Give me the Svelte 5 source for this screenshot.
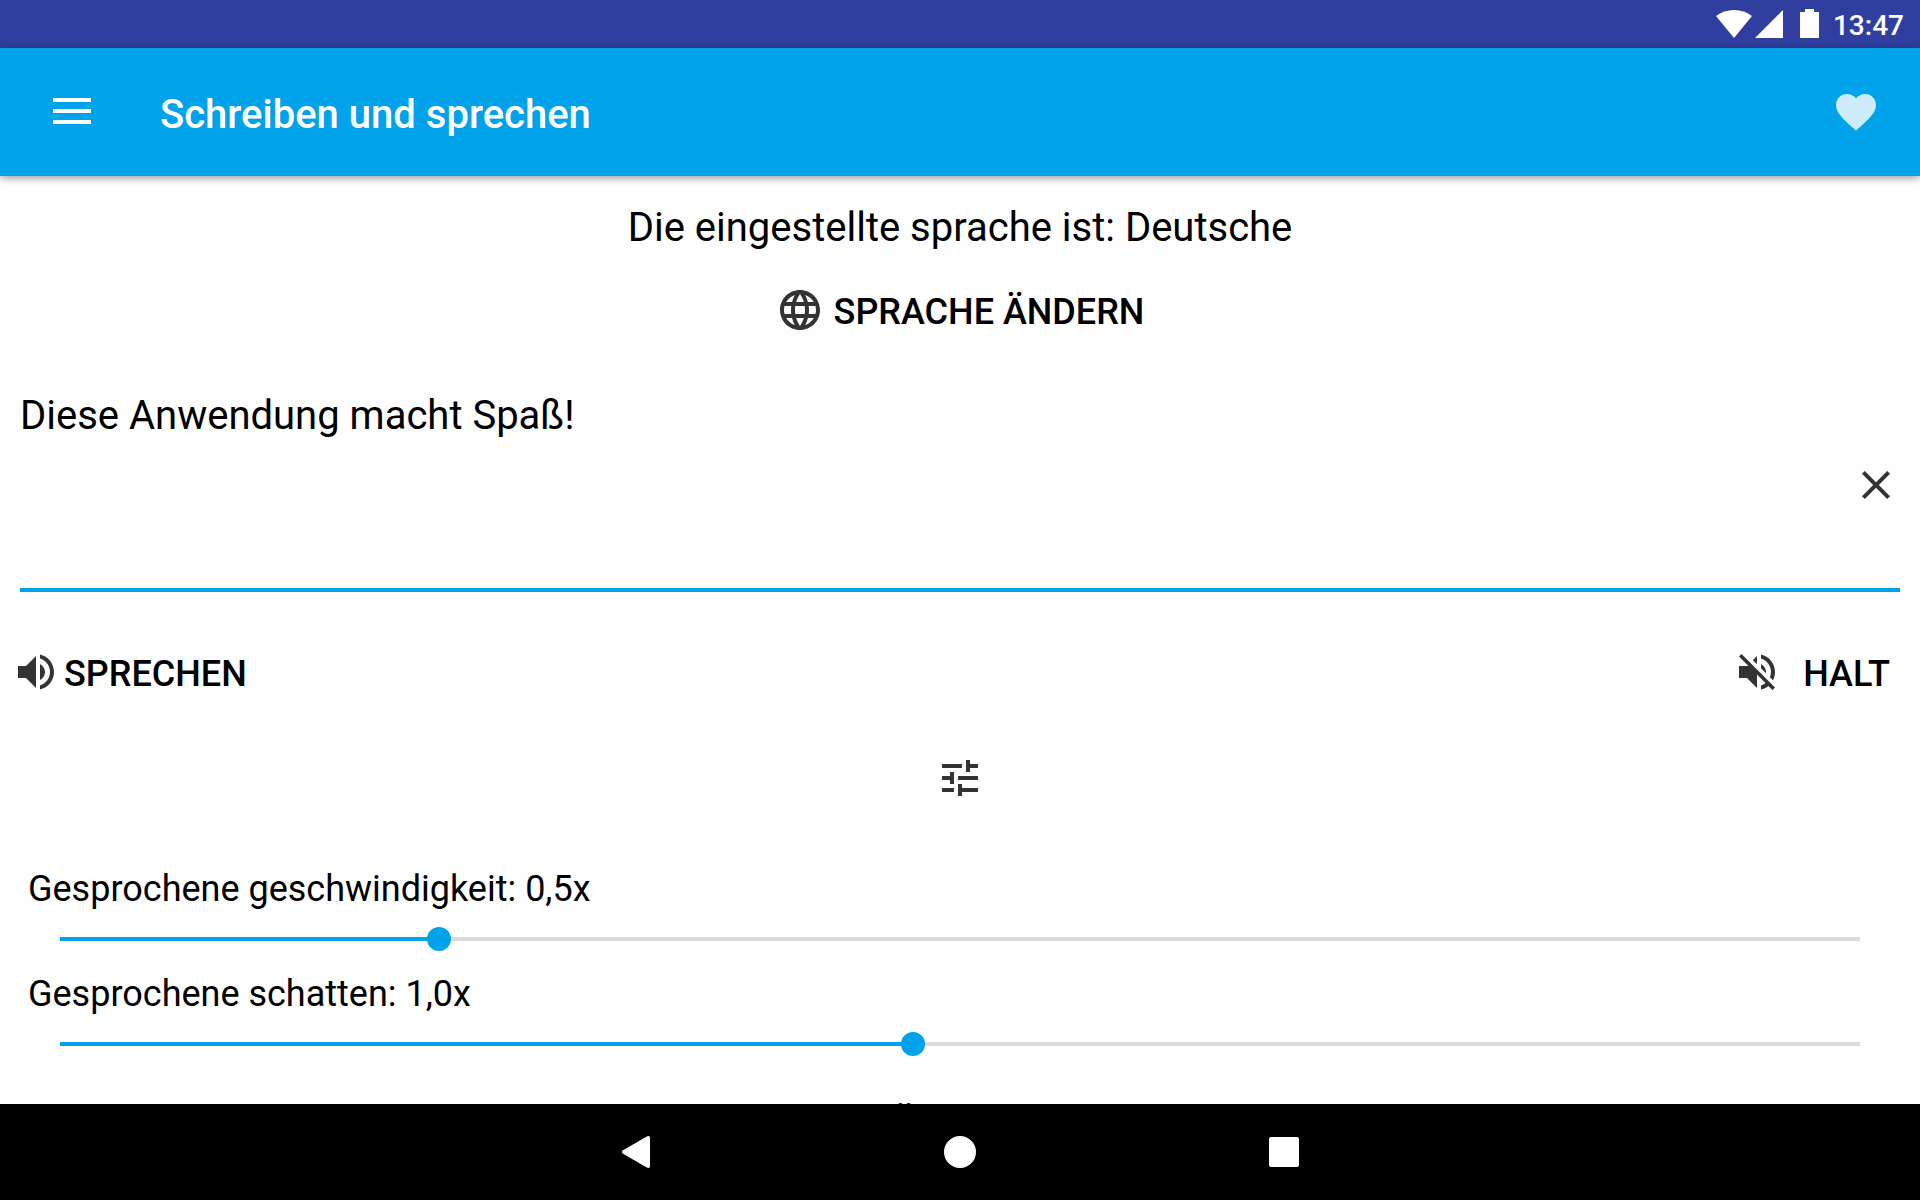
<script>
  let text = $state('Diese Anwendung macht Spaß!');
  let sliders = $state([
    { id: 'speed', label: 'Gesprochene geschwindigkeit', value: 0.5 },
    { id: 'pitch', label: 'Gesprochene schatten', value: 1 }
  ]);

  const format = (value) => value.toFixed(1).replace('.', ',') + 'x';
  const fill = (value) => ((value - 0.1) / 1.9) * 100;
</script>

<div class="screen">
  <div class="status">
    <svg class="wifi" width="36" height="28" viewBox="0 0 36 28" aria-hidden="true">
      <path d="M18 28L0 6C10-2 26-2 36 6z" />
    </svg>
    <svg class="signal" width="28" height="28" viewBox="0 0 28 28" aria-hidden="true">
      <path d="M0 28L28 0V28z" />
    </svg>
    <svg class="battery" width="19" height="29" viewBox="0 0 19 29" aria-hidden="true">
      <path d="M5 0h9v3h5v26H0V3h5z" />
    </svg>
    <time>13:47</time>
  </div>

  <header>
    <button class="icon-button" aria-label="Menü">
      <svg width="38" height="28" viewBox="0 0 38 28">
        <path d="M0 0h38v4H0zM0 11h38v4H0zM0 22h38v4H0z" />
      </svg>
    </button>
    <h1>Schreiben und sprechen</h1>
    <button class="icon-button favorite" aria-label="Favorit">
      <svg width="48" height="48" viewBox="0 0 24 24">
        <path d="M12 21.35l-1.45-1.32C5.4 15.36 2 12.28 2 8.5 2 5.42 4.42 3 7.5 3c1.74 0 3.41.81 4.5 2.09C13.09 3.81 14.76 3 16.5 3 19.58 3 22 5.42 22 8.5c0 3.78-3.4 6.86-8.55 11.54L12 21.35z" />
      </svg>
    </button>
  </header>

  <main>
    <p class="language">Die eingestellte sprache ist: Deutsche</p>
    <button class="action change">
      <svg width="48" height="48" viewBox="0 0 24 24" aria-hidden="true">
        <path d="M11.99 2C6.47 2 2 6.48 2 12s4.47 10 9.99 10C17.52 22 22 17.52 22 12S17.52 2 11.99 2zm6.93 6h-2.95c-.32-1.25-.78-2.45-1.38-3.56 1.84.63 3.37 1.91 4.33 3.56zM12 4.04c.83 1.2 1.48 2.53 1.91 3.96h-3.82c.43-1.43 1.08-2.76 1.91-3.96zM4.26 14C4.1 13.36 4 12.69 4 12s.1-1.36.26-2h3.38c-.08.66-.14 1.32-.14 2 0 .68.06 1.34.14 2H4.26zm.82 2h2.95c.32 1.25.78 2.45 1.38 3.56-1.84-.63-3.37-1.9-4.33-3.56zm2.95-8H5.08c.96-1.66 2.49-2.93 4.33-3.56C8.81 5.55 8.35 6.75 8.03 8zM12 19.96c-.83-1.2-1.48-2.53-1.91-3.96h3.82c-.43 1.43-1.08 2.76-1.91 3.96zM14.34 14H9.66c-.09-.66-.16-1.32-.16-2 0-.68.07-1.35.16-2h4.68c.09.65.16 1.32.16 2 0 .68-.07 1.34-.16 2zm.25 5.56c.6-1.11 1.06-2.31 1.38-3.56h2.95c-.96 1.65-2.49 2.93-4.33 3.56zM16.36 14c.08-.66.14-1.32.14-2 0-.68-.06-1.34-.14-2h3.38c.16.64.26 1.31.26 2s-.1 1.36-.26 2h-3.38z" />
      </svg>
      <span>SPRACHE ÄNDERN</span>
    </button>

    <div class="field">
      <textarea aria-label="Text" spellcheck="false" bind:value={text}></textarea>
      <button class="clear" aria-label="Text löschen" onclick={() => (text = '')}>
        <svg width="48" height="48" viewBox="0 0 24 24">
          <path d="M19 6.41L17.59 5 12 10.59 6.41 5 5 6.41 10.59 12 5 17.59 6.41 19 12 13.41 17.59 19 19 17.59 13.41 12z" />
        </svg>
      </button>
    </div>

    <div class="playback">
      <button class="action speak">
        <svg width="48" height="48" viewBox="0 0 24 24" aria-hidden="true">
          <path d="M3 9v6h4l5 5V4L7 9H3zm13.5 3c0-1.77-1.02-3.29-2.5-4.03v8.05c1.48-.73 2.5-2.25 2.5-4.02zM14 3.23v2.06c2.89.86 5 3.54 5 6.71s-2.11 5.85-5 6.71v2.06c4.01-.91 7-4.49 7-8.77s-2.99-7.86-7-8.77z" />
        </svg>
        <span>SPRECHEN</span>
      </button>
      <button class="action stop">
        <svg width="48" height="48" viewBox="0 0 24 24" aria-hidden="true">
          <path d="M16.5 12c0-1.77-1.02-3.29-2.5-4.03v2.21l2.45 2.45c.03-.2.05-.41.05-.63zm2.5 0c0 .94-.2 1.82-.54 2.64l1.51 1.51C20.63 14.91 21 13.5 21 12c0-4.28-2.99-7.86-7-8.77v2.06c2.89.86 5 3.54 5 6.71zM4.27 3L3 4.27 7.73 9H3v6h4l5 5v-6.73l4.25 4.25c-.67.52-1.42.93-2.25 1.18v2.06c1.38-.31 2.63-.95 3.69-1.81L19.73 21 21 19.73l-9-9L4.27 3zM12 4L9.91 6.09 12 8.18V4z" />
        </svg>
        <span>HALT</span>
      </button>
    </div>

    <button class="action tune" aria-label="Einstellungen">
      <svg width="48" height="48" viewBox="0 0 24 24">
        <path d="M3 17v2h6v-2H3zM3 5v2h10V5H3zm10 16v-2h8v-2h-8v-2h-2v6h2zM7 9v2H3v2h4v2h2V9H7zm14 4v-2H11v2h10zm-6-4h2V7h4V5h-4V3h-2v6z" />
      </svg>
    </button>

    <div class="settings">
      {#each sliders as slider (slider.id)}
        <div class="setting">
          <label for={slider.id}>{slider.label}: {format(slider.value)}</label>
          <input
            id={slider.id}
            type="range"
            min="0.1"
            max="2"
            step="0.1"
            bind:value={slider.value}
            style:--fill="{fill(slider.value)}%"
          />
        </div>
      {/each}
    </div>

    <button class="action open"><span>ÖFFNEN</span></button>
  </main>

  <nav>
    <button aria-label="Zurück">
      <svg width="32" height="32" viewBox="0 0 32 32">
        <path d="M3 14.200L26.800.4Q30-.8 30 2V30Q30 32.800 26.800 31.600L3 17.800Q1 16 3 14.200z" />
      </svg>
    </button>
    <button aria-label="Startseite">
      <svg width="32" height="32" viewBox="0 0 32 32"><circle cx="16" cy="16" r="16" /></svg>
    </button>
    <button aria-label="Übersicht">
      <svg width="32" height="32" viewBox="0 0 32 32"><rect x="1" y="1" width="30" height="30" rx="2" /></svg>
    </button>
  </nav>
</div>

<style>
  :global(body) {
    margin: 0;
  }

  .screen {
    --accent: #00a2e9;
    display: flex;
    flex-direction: column;
    height: 100vh;
    background: #fefefe;
    color: #000;
    font-family: Roboto, sans-serif;
  }

  svg {
    display: block;
    flex: none;
    fill: currentColor;
  }

  button {
    display: flex;
    align-items: center;
    justify-content: center;
    padding: 0;
    border: 0;
    background: none;
    color: inherit;
    font: inherit;
    cursor: pointer;
  }

  .status {
    display: flex;
    flex: none;
    align-items: flex-end;
    justify-content: flex-end;
    box-sizing: border-box;
    height: 48px;
    padding: 0 16px 10px;
    background: #303f9f;
    color: #fff;
  }

  .signal {
    margin-left: 3px;
  }

  .battery {
    margin: 0 14px 0 17px;
  }

  time {
    font-size: 28px;
    font-weight: 500;
    line-height: 24px;
  }

  header {
    display: flex;
    flex: none;
    align-items: center;
    height: 128px;
    padding: 0 24px 0 32px;
    background: var(--accent);
    color: #fff;
    box-shadow: 0 2px 8px rgba(0, 0, 0, 0.4);
    z-index: 1;
  }

  .icon-button {
    width: 80px;
    height: 80px;
  }

  .favorite {
    opacity: 0.8;
  }

  h1 {
    flex: 1;
    margin: 0;
    padding: 6px 0 0 48px;
    font-size: 40px;
    font-weight: 500;
    line-height: 48px;
  }

  main {
    display: flex;
    flex: 1;
    flex-direction: column;
    align-items: center;
    min-height: 0;
    overflow-y: auto;
    scrollbar-width: none;
  }

  main > * {
    flex: none;
  }

  .language {
    margin: 28px 0 22px;
    font-size: 40px;
    line-height: 48px;
  }

  .action {
    height: 72px;
    font-size: 36px;
    font-weight: 500;
    line-height: 42px;
  }

  .action span {
    padding-top: 4px;
  }

  .action svg,
  .clear svg {
    fill: #333;
  }

  .change {
    gap: 10px;
  }

  .field {
    position: relative;
    box-sizing: border-box;
    width: 100%;
    padding: 0 20px;
  }

  textarea {
    display: block;
    box-sizing: border-box;
    width: 100%;
    height: 246px;
    padding: 46px 64px 0 0;
    border: 0;
    border-bottom: 4px solid var(--accent);
    border-radius: 0;
    outline: 0;
    background: none;
    color: inherit;
    font: inherit;
    font-size: 40px;
    line-height: 48px;
    resize: none;
  }

  .clear {
    position: absolute;
    top: 115px;
    right: 20px;
  }

  .playback {
    display: flex;
    justify-content: space-between;
    box-sizing: border-box;
    width: 100%;
    margin: 44px 0 34px;
    padding: 0 30px 0 12px;
  }

  .speak {
    gap: 4px;
  }

  .stop {
    gap: 22px;
  }

  .tune {
    width: 96px;
  }

  .settings {
    display: flex;
    flex-direction: column;
    gap: 22px;
    width: 100%;
    margin: 54px 0 30px;
  }

  .setting {
    display: flex;
    flex-direction: column;
    gap: 17px;
  }

  label {
    padding-left: 28px;
    font-size: 36px;
    line-height: 42px;
  }

  input {
    height: 24px;
    margin: 0 48px;
    appearance: none;
    outline: 0;
    background: linear-gradient(to right, var(--accent) var(--fill), #dbdbdb var(--fill)) center / calc(100% - 24px) 4px no-repeat;
  }

  input::-webkit-slider-thumb {
    width: 24px;
    height: 24px;
    appearance: none;
    border: 0;
    border-radius: 50%;
    background: var(--accent);
  }

  nav {
    display: flex;
    flex: none;
    justify-content: center;
    gap: 164px;
    height: 96px;
    background: #000;
    color: #fff;
  }

  nav button {
    width: 160px;
  }
</style>
